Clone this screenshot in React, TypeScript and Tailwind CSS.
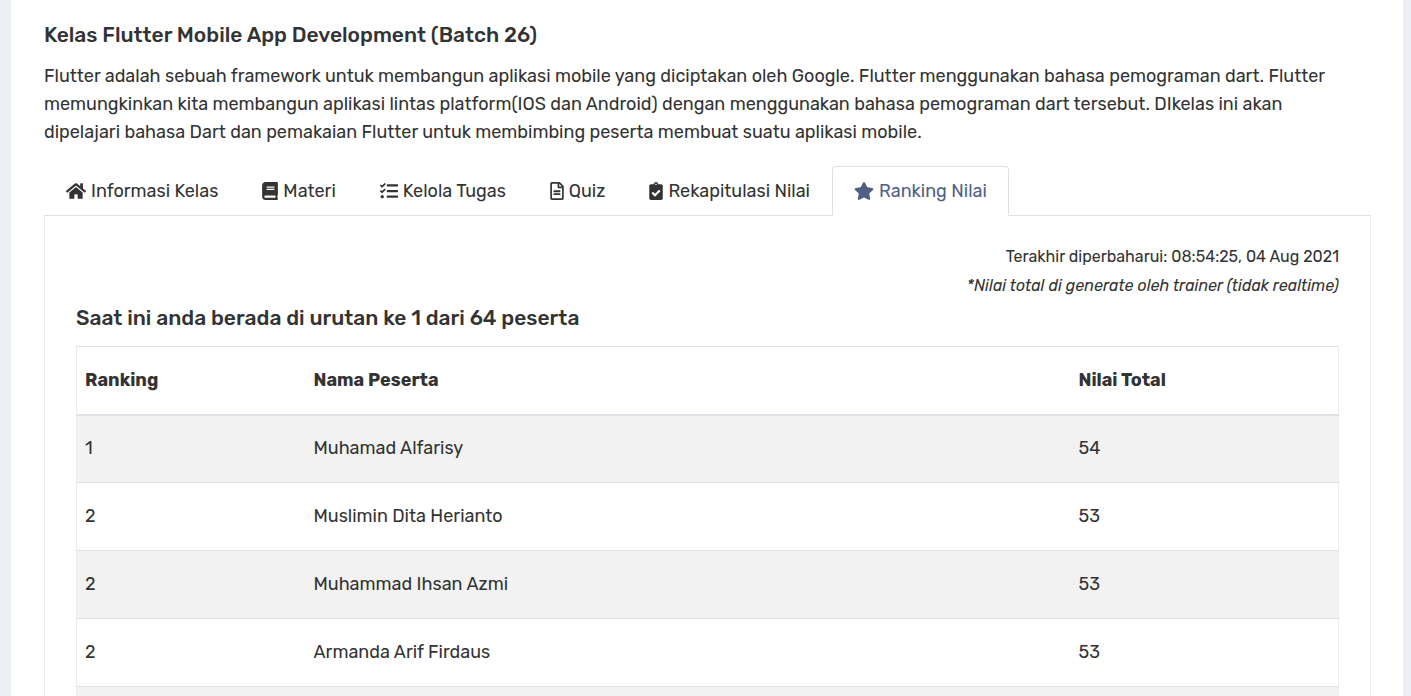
import React from "react";
import {
  FaBook,
  FaClipboardCheck,
  FaHome,
  FaRegFileAlt,
  FaStar,
  FaTasks,
} from "react-icons/fa";

const tabs = [
  { label: "Informasi Kelas", icon: <FaHome className="h-[18px] w-5" /> },
  { label: "Materi", icon: <FaBook className="h-[18px] w-4" /> },
  { label: "Kelola Tugas", icon: <FaTasks className="h-[18px] w-[18px]" /> },
  { label: "Quiz", icon: <FaRegFileAlt className="h-[18px] w-[14px]" /> },
  { label: "Rekapitulasi Nilai", icon: <FaClipboardCheck className="h-[18px] w-[14px]" /> },
  { label: "Ranking Nilai", icon: <FaStar className="h-[18px] w-5" />, active: true },
];

const rows = [
  { rank: 1, name: "Muhamad Alfarisy", total: 54 },
  { rank: 2, name: "Muslimin Dita Herianto", total: 53 },
  { rank: 2, name: "Muhammad Ihsan Azmi", total: 53 },
  { rank: 2, name: "Armanda Arif Firdaus", total: 53 },
];

export default function App() {
  return (
    <div className="h-screen overflow-hidden bg-[#ecf0f5] pr-2 pl-[11px] font-['Rubik','Roboto',sans-serif] text-[18px] text-[#333333]">
      <main className="min-h-full bg-white pr-8 pl-[33px] pt-5">
        <h1 className="text-[21px] leading-[30px] font-medium">
          Kelas Flutter Mobile App Development (Batch 26)
        </h1>
        <p className="mt-3 leading-[28px]">
          Flutter adalah sebuah framework untuk membangun aplikasi mobile yang diciptakan oleh Google. Flutter menggunakan bahasa pemograman dart. Flutter
          <br />
          memungkinkan kita membangun aplikasi lintas platform(IOS dan Android) dengan menggunakan bahasa pemograman dart tersebut. DIkelas ini akan
          <br />
          dipelajari bahasa Dart dan pemakaian Flutter untuk membimbing peserta membuat suatu aplikasi mobile.
        </p>

        <nav className="mt-5 flex border-b border-[#dee2e6]">
          {tabs.map((tab) => (
            <a
              key={tab.label}
              href="#"
              aria-current={tab.active ? "page" : undefined}
              className={
                tab.active
                  ? "-mb-px flex h-[50px] items-center gap-[5px] rounded-t border border-b-white border-[#dee2e6] bg-white px-[21px] text-[#506086]"
                  : "-mb-px flex h-[50px] items-center gap-[5px] border border-transparent px-[21px]"
              }
            >
              {tab.icon}
              <span>{tab.label}</span>
            </a>
          ))}
        </nav>

        <section className="border-x border-[#ebedf2] px-[31px] pt-[26px]">
          <div className="text-right text-[16px] leading-[29px]">
            <p>Terakhir diperbaharui: 08:54:25, 04 Aug 2021</p>
            <p className="italic">*Nilai total di generate oleh trainer (tidak realtime)</p>
          </div>
          <h2 className="mt-[3px] text-[21px] leading-[30px] font-medium">
            Saat ini anda berada di urutan ke 1 dari 64 peserta
          </h2>
          <table className="mt-[13px] w-full table-fixed border-collapse border border-[#ebedf2] text-left">
            <colgroup>
              <col className="w-[229px]" />
              <col />
              <col className="w-[268px]" />
            </colgroup>
            <thead>
              <tr className="h-[68px] border-t border-b-2 border-[#dee2e6]">
                <th className="px-2 font-bold">Ranking</th>
                <th className="px-2 font-bold">Nama Peserta</th>
                <th className="px-2 font-bold">Nilai Total</th>
              </tr>
            </thead>
            <tbody>
              {rows.map((row) => (
                <tr key={row.name} className="h-[68px] border-b border-[#dee2e6] odd:bg-[#f2f2f2]">
                  <td className="px-2">{row.rank}</td>
                  <td className="px-2">{row.name}</td>
                  <td className="px-2">{row.total}</td>
                </tr>
              ))}
              <tr className="h-[68px] odd:bg-[#f2f2f2]">
                <td colSpan={3} />
              </tr>
            </tbody>
          </table>
        </section>
      </main>
    </div>
  );
}
